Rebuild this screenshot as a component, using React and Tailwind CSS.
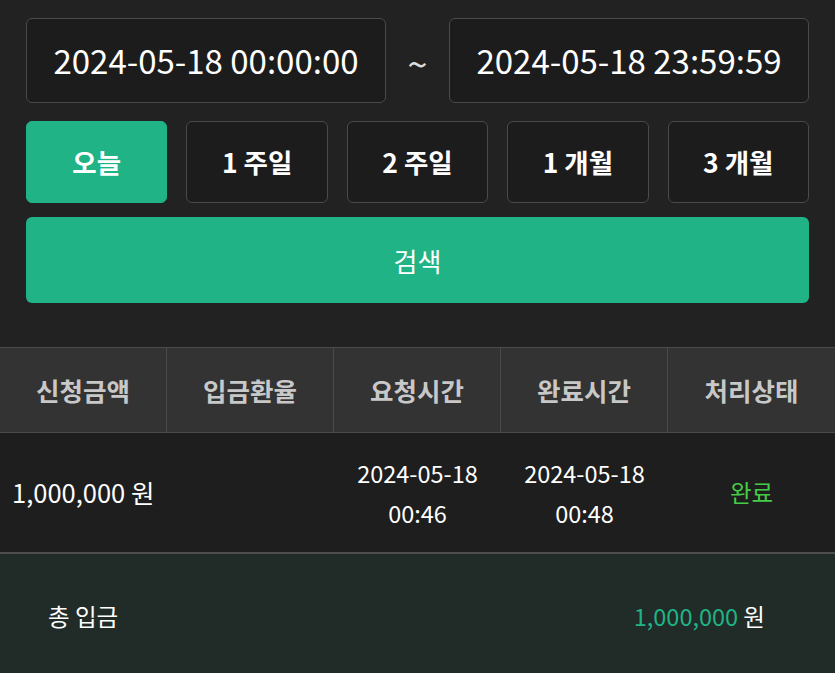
import React from "react";

const font = { fontFamily: '"Noto Sans CJK KR", "Noto Sans", sans-serif' };

export default function App() {
  const periods = ["오늘", "1 주일", "2 주일", "1 개월", "3 개월"];
  const headers = ["신청금액", "입금환율", "요청시간", "완료시간", "처리상태"];
  return (
    <div className="w-[835px] h-[673px] bg-[#222222] overflow-hidden" style={font}>
      <div className="px-[26px] pt-[18px]">
        <div className="flex items-center">
          <div className="w-[360px] h-[85px] rounded-[6px] border border-[#4a4a4a] bg-[#1c1c1c] flex items-center justify-center text-[33px] text-white">
            2024-05-18 00:00:00
          </div>
          <div className="flex-1 text-center text-[36px] text-[#dddddd] leading-none pt-[2px]">~</div>
          <div className="w-[360px] h-[85px] rounded-[6px] border border-[#4a4a4a] bg-[#1c1c1c] flex items-center justify-center text-[33px] text-white">
            2024-05-18 23:59:59
          </div>
        </div>
        <div className="mt-[18px] grid grid-cols-5 gap-[19px]">
          {periods.map((p, i) => (
            <div
              key={p}
              className={
                i === 0
                  ? "h-[82px] rounded-[6px] bg-[#20b386] border border-[#20b386] flex items-center justify-center text-[26.5px] font-bold text-white"
                  : "h-[82px] rounded-[6px] bg-[#1c1c1c] border border-[#4a4a4a] flex items-center justify-center text-[26.5px] font-bold text-white"
              }
            >
              {p}
            </div>
          ))}
        </div>
        <div className="mt-[14px] h-[86px] rounded-[6px] bg-[#20b386] flex items-center justify-center text-[26px] text-white">
          검색
        </div>
      </div>
      <div className="mt-[44px] grid grid-cols-5 h-[86px] bg-[#333333] border-t border-b border-[#4a4a4a]">
        {headers.map((h, i) => (
          <div
            key={h}
            className={
              i < 4
                ? "flex items-center justify-center text-[25.5px] font-bold text-[#c8c8c8] border-r border-[#4a4a4a]"
                : "flex items-center justify-center text-[25.5px] font-bold text-[#c8c8c8]"
            }
          >
            {h}
          </div>
        ))}
      </div>
      <div className="grid grid-cols-5 h-[121px] bg-[#1e1e1e] border-b-2 border-[#4e4e4e] text-[23.5px] text-white">
        <div className="flex items-center pl-[12px] whitespace-nowrap text-[25.5px]">1,000,000 원</div>
        <div></div>
        <div className="flex flex-col items-center justify-center leading-[40px]">
          <span>2024-05-18</span>
          <span>00:46</span>
        </div>
        <div className="flex flex-col items-center justify-center leading-[40px]">
          <span>2024-05-18</span>
          <span>00:48</span>
        </div>
        <div className="flex items-center justify-center text-[#44cc44]">완료</div>
      </div>
      <div className="h-[120px] bg-[#212c28] flex items-center justify-between pl-[48px] pr-[70px] pt-[6px] text-[23.5px] text-white">
        <span>총 입금</span>
        <span>
          <span className="text-[#20b386]">1,000,000</span> 원
        </span>
      </div>
    </div>
  );
}
